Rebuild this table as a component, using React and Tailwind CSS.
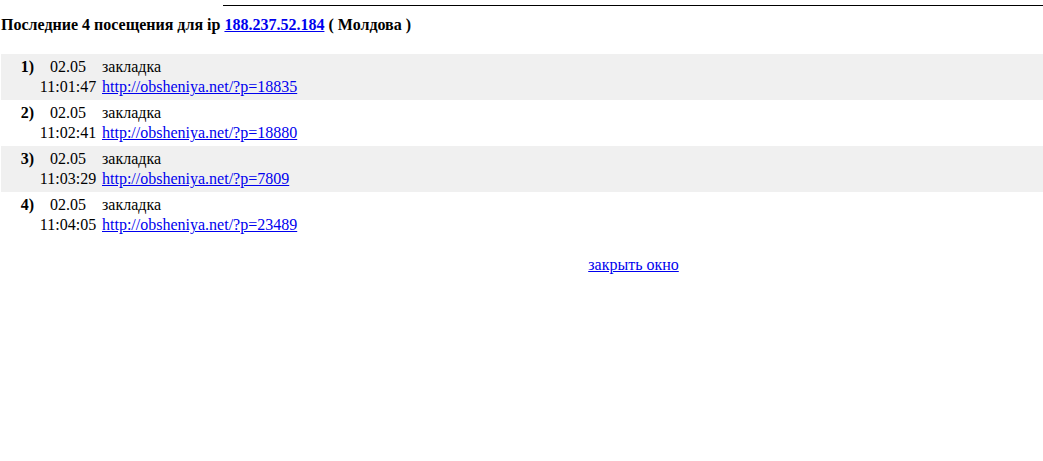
const visits = [
  { n: 1, time: "11:01:47", url: "http://obsheniya.net/?p=18835" },
  { n: 2, time: "11:02:41", url: "http://obsheniya.net/?p=18880" },
  { n: 3, time: "11:03:29", url: "http://obsheniya.net/?p=7809" },
  { n: 4, time: "11:04:05", url: "http://obsheniya.net/?p=23489" },
];

export default function App() {
  return (
    <div className="min-h-[461px] bg-white text-black font-['Liberation_Serif','Times_New_Roman',serif] text-[16px]">
      <div className="pt-[5px]">
        <div className="ml-[223px] h-px bg-black" />
      </div>

      <div className="pl-[1px] pt-[10px] text-[16px] font-bold leading-[18px]">
        Последние 4 посещения для ip{" "}
        <a href="#" className="text-[#0000ee] underline">188.237.52.184</a> ( Молдова )
      </div>

      <div className="mt-[20px] pl-[1px]">
        {visits.map((v, i) => (
          <div
            key={v.n}
            className={`flex items-start py-[3px] leading-[20px] ${i % 2 === 0 ? "bg-[#f0f0f0]" : "bg-white"}`}
          >
            <div className="w-[35px] text-right font-bold pr-[2px]">{v.n})</div>
            <div className="w-[64px] flex flex-col items-center">
              <span>02.05</span>
              <span>{v.time}</span>
            </div>
            <div className="pl-[2px] flex flex-col">
              <span>закладка</span>
              <a href="#" className="text-[#0000ee] underline">{v.url}</a>
            </div>
          </div>
        ))}
      </div>

      <div className="flex justify-center pl-[224px] mt-[17px]">
        <a href="#" className="text-[#0000ee] underline leading-[20px]">закрыть окно</a>
      </div>
    </div>
  );
}
